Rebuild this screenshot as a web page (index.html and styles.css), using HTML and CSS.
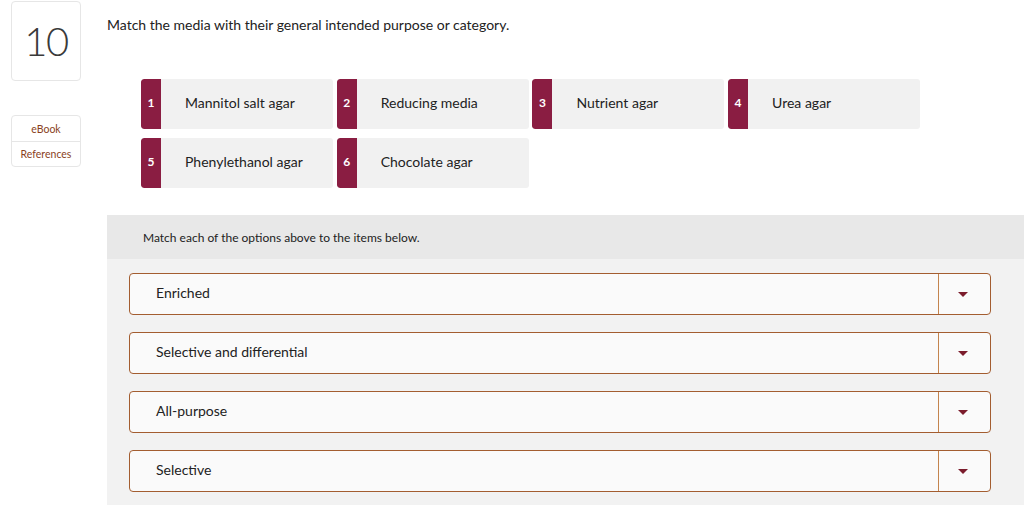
FILE: index.html
```html
<!DOCTYPE html>
<html>
<head>
<meta charset="utf-8">
<link rel="stylesheet" href="styles.css">
</head>
<body>
<div class="page">
  <aside class="side">
    <div class="qnum">10</div>
    <div class="links">
      <div class="link">eBook</div>
      <div class="link">References</div>
    </div>
  </aside>
  <main class="main">
    <p class="title">Match the media with their general intended purpose or category.</p>
    <div class="options">
      <div class="opt"><span class="tab">1</span><span class="label">Mannitol salt agar</span></div>
      <div class="opt"><span class="tab">2</span><span class="label">Reducing media</span></div>
      <div class="opt"><span class="tab">3</span><span class="label">Nutrient agar</span></div>
      <div class="opt"><span class="tab">4</span><span class="label">Urea agar</span></div>
      <div class="opt"><span class="tab">5</span><span class="label">Phenylethanol agar</span></div>
      <div class="opt"><span class="tab">6</span><span class="label">Chocolate agar</span></div>
    </div>
    <section class="panel">
      <div class="panel-head">Match each of the options above to the items below.</div>
      <div class="rows">
        <div class="row"><span class="row-text">Enriched</span><span class="row-btn"><span class="arrow"></span></span></div>
        <div class="row"><span class="row-text">Selective and differential</span><span class="row-btn"><span class="arrow"></span></span></div>
        <div class="row"><span class="row-text">All-purpose</span><span class="row-btn"><span class="arrow"></span></span></div>
        <div class="row"><span class="row-text">Selective</span><span class="row-btn"><span class="arrow"></span></span></div>
      </div>
    </section>
  </main>
</div>
</body>
</html>
```
FILE: styles.css
```css
* { box-sizing: border-box; }
html, body { margin: 0; padding: 0; background: #fff; }
body { font-family: Lato, "Open Sans", Arial, sans-serif; color: #222; }
.page { display: flex; width: 1024px; height: 512px; overflow: hidden; }
.side { width: 107px; flex: none; padding: 1px 0 0 11px; }
.qnum {
  width: 70px; height: 80px;
  border: 1px solid #e6e6e6; border-radius: 4px;
  display: flex; align-items: center; justify-content: center;
  font-size: 40px; font-weight: 300; color: #3a3a3a; letter-spacing: -1.5px;
}
.links {
  margin-top: 34px; width: 70px;
  border: 1px solid #e6e6e6; border-radius: 4px;
}
.link {
  height: 25px; display: flex; align-items: center; justify-content: center;
  font-size: 10.5px; color: #8a3f1c;
}
.link + .link { border-top: 1px solid #e6e6e6; }
.main { flex: 1; min-width: 0; }
.title { margin: 17px 0 0 0; font-size: 14px; line-height: 16px; color: #222; }
.options {
  margin: 46px 0 0 34px;
  display: grid; grid-template-columns: repeat(4, 192px);
  column-gap: 3.7px; row-gap: 9px;
}
.opt {
  height: 50px; display: flex; align-items: center;
  background: #f1f1f1; border-radius: 3px; overflow: hidden;
}
.tab {
  width: 20px; align-self: stretch; flex: none;
  background: #8a1d42; color: #fff; font-weight: 700; font-size: 12px;
  display: flex; align-items: center; justify-content: center;
  padding-bottom: 3px;
  border-radius: 3px 0 0 3px;
}
.label { margin-left: 24px; margin-bottom: 3px; font-size: 14px; color: #222; }
.panel { margin-top: 27px; background: #f2f2f2; height: 290px; }
.panel-head {
  height: 44px; background: #e8e8e8;
  display: flex; align-items: center; padding-left: 36px;
  font-size: 12px; color: #222;
}
.rows {
  padding: 14px 33px 0 22px;
  display: flex; flex-direction: column; gap: 17px;
}
.row {
  height: 42px; display: flex; align-items: stretch;
  background: #fafafa; border: 1px solid #a35d30; border-radius: 4px;
}
.row-text { flex: 1; display: flex; align-items: center; padding: 0 0 3px 26px; font-size: 14px; color: #222; }
.row-btn {
  width: 52px; flex: none; border-left: 1px solid #c4844e;
  display: flex; align-items: center; justify-content: center;
}
.arrow {
  width: 0; height: 0; margin-right: 4px;
  border-left: 5px solid transparent; border-right: 5px solid transparent;
  border-top: 5px solid #7b1c2c;
}
```
